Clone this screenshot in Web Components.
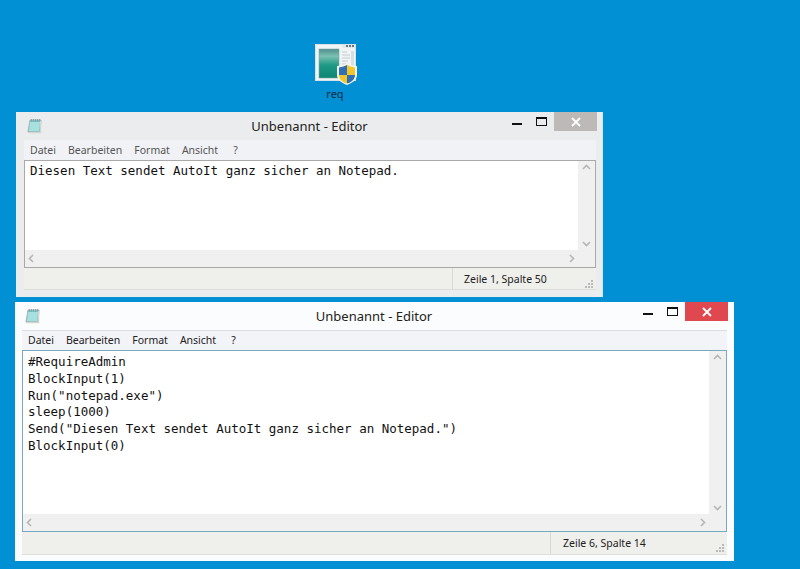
<!DOCTYPE html>
<html>
<head>
<meta charset="utf-8">
<title>Editor</title>
<style>
  html, body { margin: 0; height: 100%; }
  body { background: #0090d3; overflow: hidden; }
</style>
</head>
<body>
<desk-top>
  <desk-icon label="req"></desk-icon>
  <note-window title="Unbenannt - Editor" status="Zeile 1, Spalte 50" style="left:16px;top:112px;width:587px;height:185px;--status:144px">Diesen Text sendet AutoIt ganz sicher an Notepad.</note-window>
  <note-window active title="Unbenannt - Editor" status="Zeile 6, Spalte 14" style="left:15px;top:302px;width:719px;height:259px;--status:177px">#RequireAdmin
BlockInput(1)
Run("notepad.exe")
sleep(1000)
Send("Diesen Text sendet AutoIt ganz sicher an Notepad.")
BlockInput(0)</note-window>
</desk-top>

<script>
class DeskTop extends HTMLElement {
    constructor() {
        super();
        this.attachShadow({ mode: 'open' }).innerHTML = `
        <style>
          :host { display: block; position: relative; width: 800px; height: 569px; overflow: hidden; }
        </style>
        <slot></slot>`;
    }
}

class DeskIcon extends HTMLElement {
    constructor() {
        super();
        const label = this.getAttribute('label') ?? '';
        this.attachShadow({ mode: 'open' }).innerHTML = `
        <style>
          :host {
            position: absolute; left: 306px; top: 43px; width: 60px;
            display: flex; flex-direction: column; align-items: center; gap: 1px;
            font: 11px "Noto Sans", sans-serif; color: #0b2a47;
          }
          svg { display: block; margin-left: 1px; }
          span { line-height: 14px; margin-left: -2px; }
        </style>
        <svg width="44" height="43" viewBox="0 0 44 43">
          <defs>
            <linearGradient id="pane" x1="0" y1="0" x2="0" y2="1">
              <stop offset="0" stop-color="#4f8f8c"/>
              <stop offset=".25" stop-color="#7cc0b2"/>
              <stop offset=".55" stop-color="#1f9a84"/>
              <stop offset="1" stop-color="#0c8573"/>
            </linearGradient>
          </defs>
          <rect x="0.5" y="1.5" width="40" height="36" fill="#f1f4f4" stroke="#d6e2e8"/>
          <rect x="27" y="2" width="13" height="3" fill="#e4e9eb"/>
          <rect x="31" y="2" width="2" height="2" fill="#6c777c"/>
          <rect x="34" y="2" width="2" height="2" fill="#6c777c"/>
          <rect x="37" y="2" width="2" height="2" fill="#6c777c"/>
          <rect x="4" y="6" width="20" height="29" fill="url(#pane)" stroke="#7fa9a8" stroke-width=".6"/>
          <path d="M27 9h5M27 12h8M27 15h8M27 18h6M27 21h4" stroke="#c3cbce"/>
          <rect x="36" y="8" width="3" height="16" fill="#d7dfe2"/>
          <path d="M32 20c3 2 7 3 10 3v9c0 5-5 8-10 10-5-2-10-5-10-10v-9c3 0 7-1 10-3z" fill="#f4f4ea"/>
          <path d="M32 22c2 1 5 2 8 2.500v7.500h-8z" fill="#f0c62c"/>
          <path d="M32 22v10h-8v-7.500c3-.5 6-1.500 8-2.500z" fill="#2f6fb4"/>
          <path d="M24 32h8v8.500c-4-1-8-4-8-8.500z" fill="#f0c62c"/>
          <path d="M32 32h8c0 4.500-4 7.500-8 8.500z" fill="#2f6fb4"/>
        </svg>
        <span>${label}</span>`;
    }
}

class NoteWindow extends HTMLElement {
    constructor() {
        super();
        const title = this.getAttribute('title') ?? '';
        const status = this.getAttribute('status') ?? '';
        this.attachShadow({ mode: 'open' }).innerHTML = `
        <style>
          :host {
            position: absolute; box-sizing: border-box;
            display: grid; grid-template-rows: 28px 20px 1fr 22px;
            padding: 0 6px 7px 8px;
            background: #ebeced; border-right: 1px solid #cfe6f3;
            font-family: "Noto Sans", sans-serif; color: #555;
            --close: #bcb9b6; --edge: #a9a9a9; --menu: #f1f2f6; --rule: #f1f2f6; --inset: 11px;
          }
          :host([active]) {
            grid-template-rows: 28px 20px 1fr 23px;
            padding: 0 6px 6px 7px;
            background: #fbfcfd; color: #222; border-right-color: #fbfcfd;
            --close: #e0484f; --edge: #78a8c2; --menu: #f3f4f8; --rule: #dcdfe2; --inset: 12px;
          }
          .bar { display: flex; align-items: flex-start; margin: 0 -1px 0 3px; }
          .bar svg.note { margin: 6px 0 0 0; flex: none; }
          .bar h1 {
            flex: 1; margin: 5px 0 0; text-align: center;
            font-size: 13px; font-weight: 400; line-height: 19px; color: #222;
            padding-left: 72px;
          }
          .ctl { display: flex; flex: none; }
          .ctl div { width: 25px; height: 19px; display: flex; align-items: center; justify-content: center; }
          .ctl .close { width: 43px; background: var(--close); }
          .menu {
            display: flex; align-items: center; gap: 12px;
            padding-left: 6px; background: var(--menu);
            border-top: 1px solid var(--rule);
            font-size: 10.5px; line-height: 19px;
          }
          .menu span:last-child { margin-left: 3px; }
          .edit {
            min-height: 0; display: grid; grid-template: 1fr 17px / 1fr 17px;
            border: 1px solid var(--edge); background: #fff;
          }
          .text {
            margin: 0; padding: 2px 5px 0; overflow: hidden;
            font: 12.5px/16.8px "DejaVu Sans Mono", monospace; color: #111; white-space: pre;
          }
          :host([active]) .text { padding-top: 3px; }
          .sb { background: #f0f0f0; display: flex; justify-content: space-between; align-items: center; }
          .v { flex-direction: column; padding: 3px 0; box-sizing: border-box; }
          .h { padding: 0 3px; }
          .corner { background: #f0f0f0; }
          .status {
            display: grid; grid-template-columns: 1fr var(--status);
            background: #efefec; border-bottom: 1px solid #dedfda;
            font-size: 10.5px; color: #222; line-height: 22px;
          }
          .status span {
            border-left: 1px solid #d8d8d4; padding-left: var(--inset); position: relative;
          }
          .grip { position: absolute; right: 2px; bottom: 2px; }
        </style>
        <div class="bar">
          <svg class="note" width="16" height="16" viewBox="0 0 16 16">
            <path d="M3 2h11l-1 12H1z" fill="#6fc7c9" stroke="#a5b3b6" stroke-width="1"/>
            <path d="M3 4h10l-1 9H2z" fill="#a6e0df"/>
            <path d="M13.500 3v11.500H2" fill="none" stroke="#d5d5cf" stroke-width="1.500"/>
            <path d="M4.500 1v2.500M6.500 1v2.500M8.500 1v2.500M10.500 1v2.500M12.500 1v2.500" stroke="#8b9aa0" stroke-width=".8"/>
          </svg>
          <h1>${title}</h1>
          <div class="ctl">
            <div><svg width="10" height="10"><rect x="0" y="6" width="10" height="2" fill="#111"/></svg></div>
            <div><svg width="11" height="9"><rect x=".5" y=".5" width="10" height="8" fill="none" stroke="#111"/><rect x="0" y="0" width="11" height="2" fill="#111"/></svg></div>
            <div class="close"><svg width="10" height="10"><path d="M1 1l8 8M9 1l-8 8" stroke="#fff" stroke-width="1.800"/></svg></div>
          </div>
        </div>
        <div class="menu"><span>Datei</span><span>Bearbeiten</span><span>Format</span><span>Ansicht</span><span>?</span></div>
        <div class="edit">
          <pre class="text"><slot></slot></pre>
          <div class="sb v">
            <svg width="9" height="6"><path d="M1 5l3.500-3.500L8 5" fill="none" stroke="#b5b5b5" stroke-width="1.600"/></svg>
            <svg width="9" height="6"><path d="M1 1l3.500 3.500L8 1" fill="none" stroke="#b5b5b5" stroke-width="1.600"/></svg>
          </div>
          <div class="sb h">
            <svg width="6" height="9"><path d="M5 1L1.500 4.500 5 8" fill="none" stroke="#b5b5b5" stroke-width="1.600"/></svg>
            <svg width="6" height="9"><path d="M1 1l3.500 3.500L1 8" fill="none" stroke="#b5b5b5" stroke-width="1.600"/></svg>
          </div>
          <div class="corner"></div>
        </div>
        <div class="status">
          <i></i>
          <span>${status}<svg class="grip" width="9" height="9"><path d="M6 1h2v2H6zM3 4h2v2H3zM6 4h2v2H6zM0 7h2v2H0zM3 7h2v2H3zM6 7h2v2H6z" fill="#b9b9b9"/></svg></span>
        </div>`;
    }
}

window.customElements.define('desk-top', DeskTop);
window.customElements.define('desk-icon', DeskIcon);
window.customElements.define('note-window', NoteWindow);
</script>
</body>
</html>
